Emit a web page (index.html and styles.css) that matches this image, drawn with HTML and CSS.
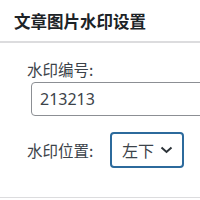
FILE: index.html
```html
<html>

<head>
	<title>文章图片水印设置</title>
	<meta http-equiv="Content-Type" content="text/html; charset=UTF-8">
	<link rel="stylesheet" href="styles.css">
</head>

<body>
	<div class="postbox">
		<div class="postbox-header">
			<h2>文章图片水印设置</h2>
		</div>
		<div class="inside">
			<div class="field">
				<label for="wm_id">水印编号:</label>
				<input type="text" id="wm_id" value="213213">
			</div>
			<div class="field row">
				<label for="wm_pos">水印位置:</label>
				<div class="select">
					<span>左下</span>
					<svg width="13" height="8" viewBox="0 0 13 8">
						<path d="M1.5 1.5 L6.5 6 L11.5 1.5" fill="none" stroke="#2c3338" stroke-width="2" />
					</svg>
				</div>
			</div>
		</div>
	</div>
</body>

</html>
```

FILE: styles.css
```css
body {
	margin: 0;
	background: #fff;
	font-family: "Noto Sans", "Noto Sans CJK SC", sans-serif;
	color: #3c434a;
}

.postbox {
	width: 200px;
	overflow: hidden;
	border-bottom: 1px solid #dcdcde;
}

.postbox-header {
	height: 43px;
	border-bottom: 2px solid #dcdcde;
	padding: 0 14px;
	box-sizing: border-box;
}

.postbox-header h2 {
	margin: 0;
	font-size: 16.5px;
	line-height: 42px;
	font-weight: bold;
	color: #1d2327;
	font-family: "Noto Sans CJK SC", sans-serif;
}

.inside {
	padding: 14px 0 29px 27px;
}

.field label {
	display: block;
	font-size: 15.5px;
	line-height: 24px;
	font-family: "Noto Sans CJK SC", sans-serif;
}

.field input {
	display: block;
	margin: 1px 0 0 4px;
	width: 220px;
	height: 34px;
	box-sizing: border-box;
	border: 1px solid #8c8f94;
	border-radius: 4px;
	padding: 0 8px;
	font-family: "Noto Sans", sans-serif;
	font-size: 16px;
	color: #3c434a;
}

.row {
	display: flex;
	align-items: center;
	margin-top: 16px;
}

.row label {
	width: 83px;
}

.select {
	display: flex;
	align-items: center;
	gap: 6px;
	width: 74px;
	height: 36px;
	box-sizing: border-box;
	border: 2px solid #2c6a9c;
	border-radius: 4px;
	padding: 0 0 0 10px;
	font-size: 16px;
	font-family: "Noto Sans CJK SC", sans-serif;
}
```
